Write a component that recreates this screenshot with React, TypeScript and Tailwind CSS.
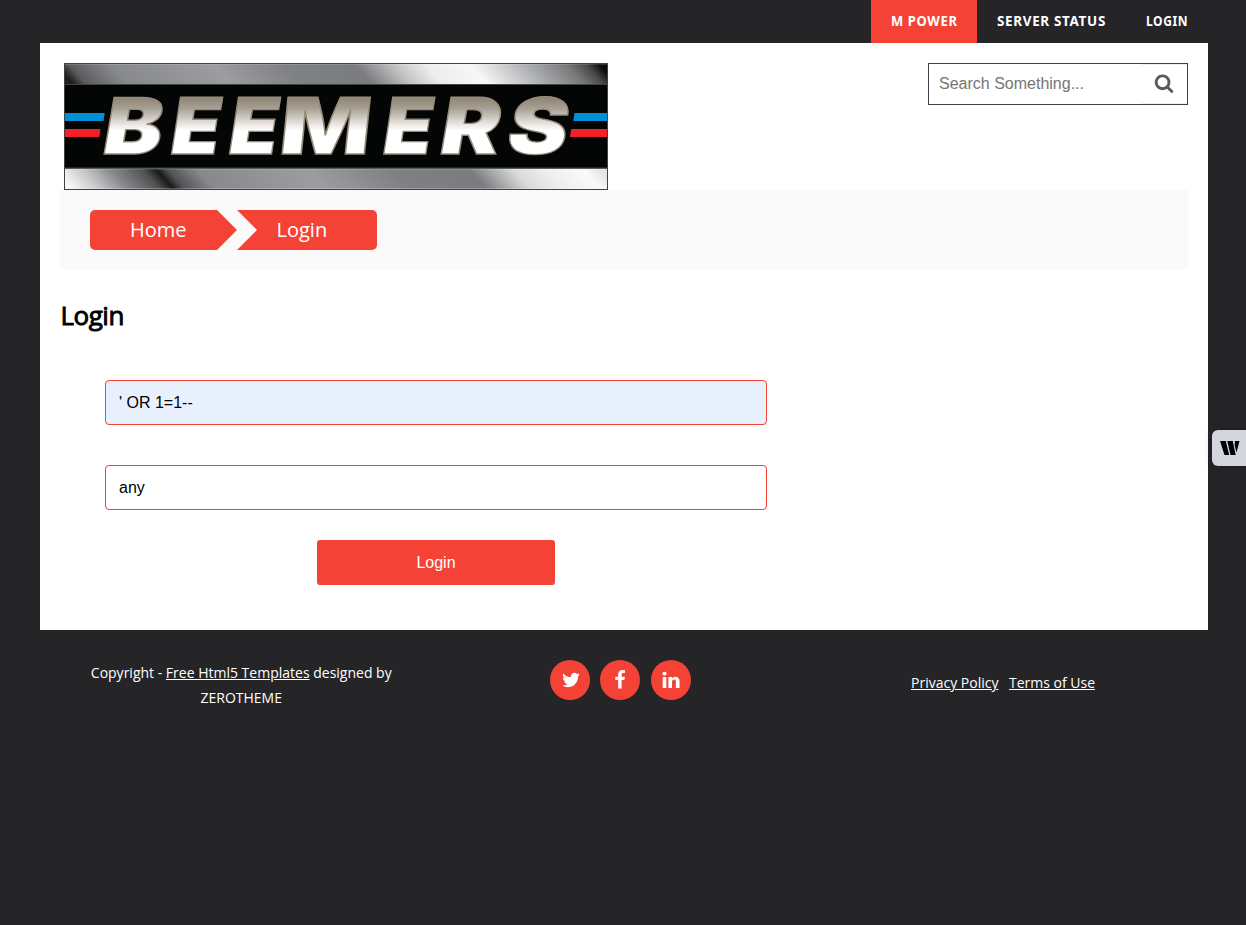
import React from "react";

function Glyph({ d, className }: { d: string; className?: string }) {
  return (
    <svg viewBox="0 0 1792 1792" width="20" height="20" fill="currentColor" className={className} aria-hidden="true">
      <path d={d} />
    </svg>
  );
}

const SEARCH =
  "M1216 832q0-185-131.500-316.500t-316.500-131.500-316.500 131.500-131.500 316.500 131.500 316.500 316.500 131.500 316.500-131.500 131.500-316.500zm512 832q0 52-38 90t-90 38q-54 0-90-38l-343-342q-179 124-399 124-143 0-273.500-55.500t-225-150-150-225-55.500-273.500 55.500-273.500 150-225 225-150 273.500-55.500 273.500 55.500 225 150 150 225 55.500 273.500q0 220-124 399l343 343q37 37 37 90z";
const TWITTER =
  "M1684 408q-67 98-162 167 1 14 1 42 0 130-38 259.500t-115.500 248.500-184.500 210.500-258 146-323 54.500q-271 0-496-145 35 4 78 4 225 0 401-138-105-2-188-64.500t-114-159.500q33 5 61 5 43 0 85-11-112-23-185.500-111.500t-73.500-205.500v-4q68 38 146 41-66-44-105-115t-39-154q0-88 44-163 121 149 294.500 238.500t371.500 99.500q-8-38-8-74 0-134 94.500-228.500t228.500-94.500q140 0 236 102 109-21 205-78-37 115-142 178 93-10 186-50z";
const FACEBOOK =
  "M1343 12v264h-157q-86 0-116 36t-30 108v189h293l-39 296h-254v759h-306v-759h-255v-296h255v-218q0-186 104-288.500t277-102.500q147 0 228 12z";
const LINKEDIN =
  "M477 625v991h-330v-991h330zm21-306q1 73-50.500 122t-135.500 49h-2q-82 0-132-49t-50-122q0-74 51.500-122.500t134.500-48.500 133 48.500 51 122.500zm1166 729v568h-329v-530q0-105-40.500-164.500t-126.500-59.500q-63 0-105.500 34.500t-63.500 85.500q-11 30-11 81v553h-329q2-399 2-647t-1-296l-1-48h329v144h-2q20-32 41-56t56.500-52 87-43.500 114.500-15.500q171 0 275 113.500t104 332.500z";

const LETTERS = [
  { char: "B", x: 36, skew: -10, scale: 1.13 },
  { char: "E", x: 103.7, skew: -9, scale: 1.03 },
  { char: "E", x: 161.7, skew: -9, scale: 1.03 },
  { char: "M", x: 213.7, skew: -6, scale: 1.22 },
  { char: "E", x: 316, skew: -9, scale: 1.03 },
  { char: "R", x: 373, skew: -10, scale: 1.15 },
  { char: "S", x: 440, skew: -10, scale: 1.16 },
];

function Logo() {
  return (
    <svg width="544" height="127" viewBox="0 0 544 127" className="block" role="img" aria-label="Beemers">
      <defs>
        <linearGradient id="top" gradientUnits="userSpaceOnUse" x1="0" y1="0" x2="544" y2="0">
          <stop offset="0" stopColor="#1c1c1d" />
          <stop offset=".025" stopColor="#5b5c5e" />
          <stop offset=".1" stopColor="#88898c" />
          <stop offset=".29" stopColor="#9c9da0" />
          <stop offset=".42" stopColor="#808184" />
          <stop offset=".55" stopColor="#7b7c7f" />
          <stop offset=".62" stopColor="#c0c1c2" />
          <stop offset=".68" stopColor="#ededee" />
          <stop offset=".76" stopColor="#f8f8f8" />
          <stop offset=".85" stopColor="#b8b9bb" />
          <stop offset=".94" stopColor="#77787a" />
          <stop offset=".975" stopColor="#48494a" />
          <stop offset="1" stopColor="#0c0c0c" />
        </linearGradient>
        <linearGradient id="bottom" gradientUnits="userSpaceOnUse" x1="0" y1="0" x2="544" y2="0">
          <stop offset="0" stopColor="#f7f7f7" />
          <stop offset=".05" stopColor="#c5c6c8" />
          <stop offset=".1" stopColor="#88898c" />
          <stop offset=".16" stopColor="#505153" />
          <stop offset=".185" stopColor="#18191a" />
          <stop offset=".205" stopColor="#505153" />
          <stop offset=".26" stopColor="#88898c" />
          <stop offset=".46" stopColor="#9c9da0" />
          <stop offset=".62" stopColor="#7f8083" />
          <stop offset=".76" stopColor="#7b7c7f" />
          <stop offset=".84" stopColor="#d8d9da" />
          <stop offset=".9" stopColor="#eeeeef" />
          <stop offset=".97" stopColor="#fafafa" />
          <stop offset="1" stopColor="#e4e4e5" />
        </linearGradient>
        <linearGradient id="metal" gradientUnits="userSpaceOnUse" x1="0" y1="-57" x2="0" y2="0">
          <stop offset="0" stopColor="#8c8271" />
          <stop offset=".2" stopColor="#a69e92" />
          <stop offset=".5" stopColor="#ece9e6" />
          <stop offset=".6" stopColor="#ffffff" />
          <stop offset="1" stopColor="#ffffff" />
        </linearGradient>
      </defs>
      <rect width="544" height="127" fill="#414244" />
      <g transform="translate(0 11) skewX(42)">
        <rect x="-12" y="-10" width="568" height="20" fill="url(#top)" />
      </g>
      <g transform="translate(0 116) skewX(42)">
        <rect x="-12" y="-10" width="568" height="20" fill="url(#bottom)" />
      </g>
      <path d="M1 1.500H543" stroke="#fff" strokeOpacity=".15" />
      <path d="M1 106H543M1 125.500H543" stroke="#fff" strokeOpacity=".25" />
      <rect x="1" y="22" width="542" height="82.500" fill="#040606" />
      <path d="M1 50H40.700L39.500 58H1zM510.500 50H543V58H509.300z" fill="#0090da" />
      <path d="M1 66H36.500L35.300 74H1zM507.200 66H543V74H506z" fill="#f31f29" />
      <g
        fontFamily="Inter"
        fontWeight="900"
        fontSize="78"
        fill="url(#metal)"
        stroke="#968b7b"
        strokeWidth="1.3"
      >
        {LETTERS.map((l, i) => (
          <text key={i} transform={`translate(${l.x} 90.500) skewX(${l.skew}) scale(${l.scale} 1)`}>
            {l.char}
          </text>
        ))}
      </g>
      <rect x=".5" y=".5" width="543" height="126" fill="none" stroke="#414244" />
    </svg>
  );
}

function NavItem({ label, className, textClass }: { label: string; className: string; textClass: string }) {
  return (
    <a
      href="#"
      className={`flex h-[43px] items-center pb-[2px] pl-5 text-[14px] font-bold tracking-[0.7px] whitespace-nowrap text-white ${className}`}
    >
      <span className={`block origin-left ${textClass}`}>{label}</span>
    </a>
  );
}

export default function App() {
  return (
    <div className="relative h-[925px] w-[1246px] overflow-hidden bg-[#252527] font-['Open_Sans',sans-serif]">
      <nav className="flex h-[43px] justify-end pr-[38px] font-['Noto_Sans',sans-serif]">
        <NavItem
          label="M POWER"
          className="w-[106px] bg-[#f44336] [font-stretch:87.5%]"
          textClass="[transform:scaleX(0.925)]"
        />
        <NavItem
          label="SERVER STATUS"
          className="w-[149px] [font-stretch:87.5%]"
          textClass="[transform:scaleX(0.96)]"
        />
        <NavItem label="LOGIN" className="w-[82px] [font-stretch:87.5%]" textClass="[transform:scaleX(0.86)]" />
      </nav>

      <main className="ml-10 h-[587px] w-[1168px] bg-white px-5 pt-5">
        <header className="flex h-[127px] items-start justify-between pl-1">
          <Logo />
          <form className="flex h-[42px] w-[260px] border border-[#414143]">
            <input
              placeholder="Search Something..."
              className="w-[213px] pl-[10px] font-['Liberation_Sans',sans-serif] text-base text-black outline-none placeholder:text-[#757575]"
            />
            <button
              type="button"
              aria-label="Search"
              className="flex w-[45px] justify-center border-y border-[#efefef] pt-[8px] pr-[2px] text-[#5a5a5a]"
            >
              <Glyph d={SEARCH} />
            </button>
          </form>
        </header>

        <div className="flex h-20 gap-0 bg-[#fafafa] pt-5 pl-[30px] text-xl text-white">
          <a
            href="#"
            className="flex h-10 w-[147px] items-center rounded-l-[5px] bg-[#f44336] pl-10 [clip-path:polygon(0_0,127px_0,147px_20px,127px_40px,0_40px)]"
          >
            Home
          </a>
          <a
            href="#"
            className="flex h-10 w-[140px] items-center rounded-r-[5px] bg-[#f44336] pl-[39.5px] [clip-path:polygon(0_0,140px_0,140px_40px,0_40px,20px_20px)]"
          >
            Login
          </a>
        </div>

        <h1 className="mt-[25px] h-10 pl-[0.5px] text-[26px] leading-10 font-normal tracking-[-0.5px] text-black [-webkit-text-stroke:0.9px_#000]">
          Login
        </h1>

        <form className="mt-[45px] ml-[45px] flex w-[662px] flex-col items-center font-['Liberation_Sans',sans-serif] text-base">
          <input
            defaultValue="' OR 1=1--"
            className="h-[45px] w-full rounded-[4px] border border-[#f44336] bg-[#e8f0fe] px-[13px] text-black outline-none"
          />
          <input
            defaultValue="any"
            className="mt-10 h-[45px] w-full rounded-[4px] border border-[#f44336] bg-white px-[13px] text-black outline-none"
          />
          <button type="button" className="mt-[30px] h-[45px] w-[238px] rounded-[3px] bg-[#f44336] text-white">
            Login
          </button>
        </form>
      </main>

      <footer className="flex px-[50px] pt-[30px] text-sm text-white">
        <p className="w-[382.5px] text-center leading-[25px]">
          Copyright -{" "}
          <a href="#" className="underline">
            Free Html5 Templates
          </a>{" "}
          designed by
          <br />
          ZEROTHEME
        </p>
        <div className="ml-[117.5px] flex">
          <a href="#" aria-label="Twitter" className="flex size-10 items-center justify-center rounded-full bg-[#f44336] pl-[2px]">
            <Glyph d={TWITTER} />
          </a>
          <a href="#" aria-label="Facebook" className="ml-[10px] flex size-10 items-center justify-center rounded-full bg-[#f44336]">
            <Glyph d={FACEBOOK} />
          </a>
          <a href="#" aria-label="LinkedIn" className="ml-[11px] flex size-10 items-center justify-center rounded-full bg-[#f44336]">
            <Glyph d={LINKEDIN} />
          </a>
        </div>
        <div className="ml-[220px] flex gap-[10.5px] pt-[10px] leading-[25px]">
          <a href="#" className="underline">
            Privacy Policy
          </a>
          <a href="#" className="underline">
            Terms of Use
          </a>
        </div>
      </footer>

      <aside className="absolute top-[430px] right-0 flex h-9 w-[34px] items-center rounded-l-[6px] bg-[#d3d6dc] pl-2 shadow-[0_0_8px_rgba(0,0,0,0.25)]">
        <svg width="20" height="14" viewBox="0 0 20 14" aria-hidden="true">
          <path d="M0 0H5.800L9.200 14H4.500zM7.300 0H12.800L15.700 14H10.500zM15 0H19.500L16.500 11.500L14.600 4z" fill="#000" />
        </svg>
      </aside>
    </div>
  );
}
